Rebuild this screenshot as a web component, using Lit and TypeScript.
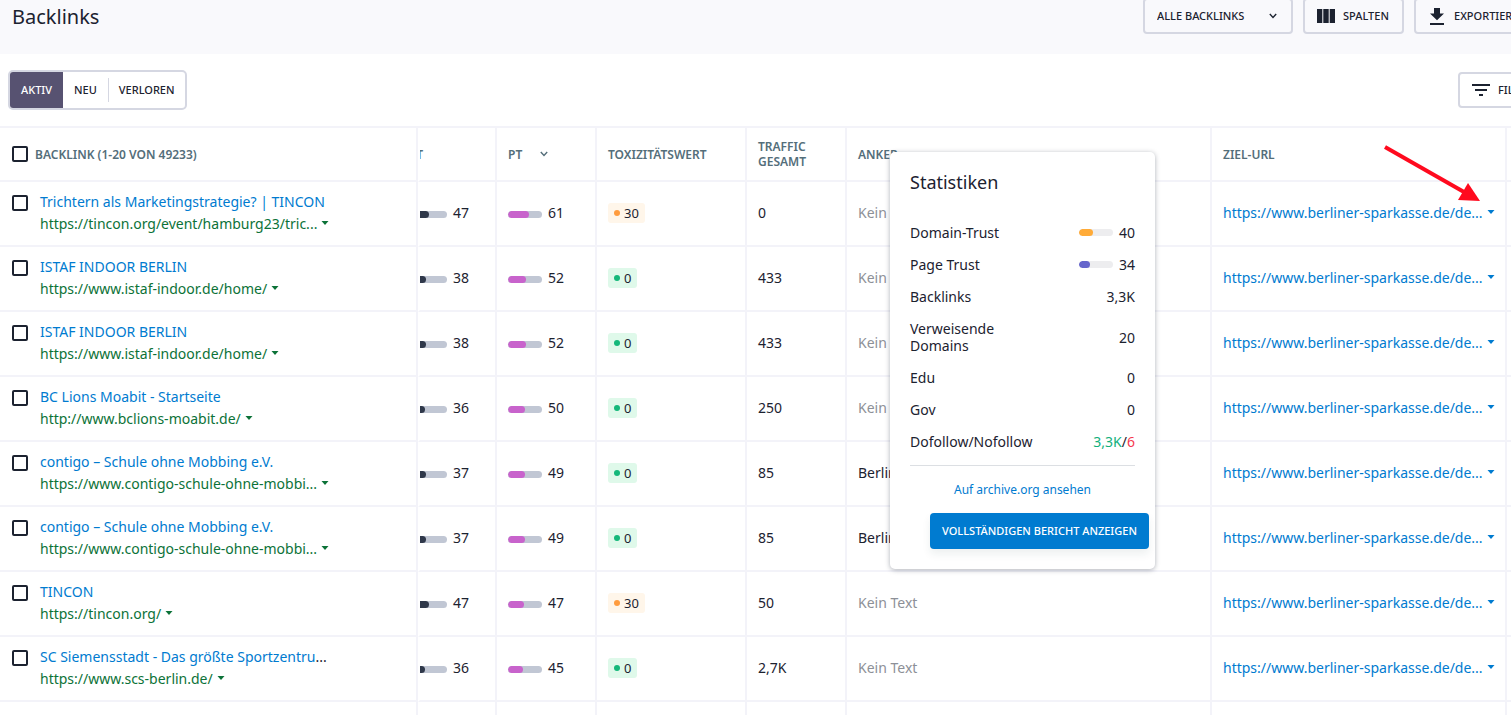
import { LitElement, html, css, svg, nothing } from "lit";
import { customElement } from "lit/decorators.js";

interface Row {
  title: string;
  cut?: boolean;
  url: string;
  long?: boolean;
  dt: number;
  pt: number;
  tox: number;
  traffic: string;
  anchor?: string;
}

const ROWS: Row[] = [
  { title: "Trichtern als Marketingstrategie? | TINCON", url: "https://tincon.org/event/hamburg23/tric...", long: true, dt: 47, pt: 61, tox: 30, traffic: "0" },
  { title: "ISTAF INDOOR BERLIN", url: "https://www.istaf-indoor.de/home/", dt: 38, pt: 52, tox: 0, traffic: "433" },
  { title: "ISTAF INDOOR BERLIN", url: "https://www.istaf-indoor.de/home/", dt: 38, pt: 52, tox: 0, traffic: "433" },
  { title: "BC Lions Moabit - Startseite", url: "http://www.bclions-moabit.de/", dt: 36, pt: 50, tox: 0, traffic: "250" },
  { title: "contigo – Schule ohne Mobbing e.V.", url: "https://www.contigo-schule-ohne-mobbi...", long: true, dt: 37, pt: 49, tox: 0, traffic: "85", anchor: "Berliner Sparkasse" },
  { title: "contigo – Schule ohne Mobbing e.V.", url: "https://www.contigo-schule-ohne-mobbi...", long: true, dt: 37, pt: 49, tox: 0, traffic: "85", anchor: "Berliner Sparkasse" },
  { title: "TINCON", url: "https://tincon.org/", dt: 47, pt: 47, tox: 30, traffic: "50" },
  { title: "SC Siemensstadt - Das größte Sportzentru", cut: true, url: "https://www.scs-berlin.de/", dt: 36, pt: 45, tox: 0, traffic: "2,7K" },
];

const caret = html`<svg class="caret" width="8" height="4" viewBox="0 0 8 4" aria-hidden="true"><path d="M0.5 0h7L4 4z" fill="currentColor" /></svg>`;

const chevron = html`<svg class="chevron" width="8" height="6" viewBox="0 0 8 6" aria-hidden="true">
  <path d="M0.8 1 4 4.400 7.200 1" fill="none" stroke="currentColor" stroke-width="1.400" />
</svg>`;

const icon = (w: number, h: number, shape: unknown) =>
  html`<svg width=${w} height=${h} viewBox="0 0 ${w} ${h}" fill="currentColor" aria-hidden="true">${shape}</svg>`;

const columnsIcon = icon(18, 14, svg`<path d="M0 0h5.3v14H0zM6.3 0h5.4v14H6.3zM12.7 0H18v14h-5.300z" />`);
const exportIcon = icon(14, 17, svg`<path d="M4 0h6v5.500h4L7 12.300 0 5.500h4zM0 15h14v2H0z" />`);
const filterIcon = icon(18, 12, svg`<path d="M0 0h18v2H0zM3 5h12v2H3zM7 10h4v2H7z" />`);

@customElement("app-root")
export class AppRoot extends LitElement {
  static styles = css`
    :host {
      display: block;
      position: relative;
      height: 100vh;
      overflow: hidden;
      background: #fff;
      color: #1c2230;
      font: 14px/22px "Noto Sans", "Open Sans", sans-serif;
    }
    * { box-sizing: border-box; }
    a { color: #007bd0; text-decoration: none; }
    button, select { font: 500 11px/16px "Noto Sans", "Open Sans", sans-serif; color: #1c2230; cursor: pointer; }
    svg { display: block; flex: none; }
    .page { margin-right: -56px; }
    .head {
      display: flex;
      gap: 10px;
      height: 56px;
      margin-top: -2px;
      padding: 0 16px 0 12px;
      background: #f9f9fc;
    }
    h1 { flex: 1; margin: 5px 0 0; font-size: 20px; line-height: 28px; font-weight: 400; }
    .btn {
      display: flex;
      align-items: center;
      gap: 8px;
      height: 36px;
      padding: 0 12px;
      border: 2px solid #d5d7e2;
      border-radius: 4px;
      background: transparent;
      white-space: nowrap;
    }
    .pick { display: grid; align-items: center; width: 150px; height: 36px; }
    .pick select {
      grid-area: 1 / 1;
      width: 100%;
      height: 36px;
      padding: 0 12px;
      border: 2px solid #d5d7e2;
      border-radius: 4px;
      appearance: none;
      background: transparent;
    }
    .pick .chevron { grid-area: 1 / 1; justify-self: end; margin-right: 16px; }
    .w-cols { width: 101px; }
    .w-export { width: 137px; gap: 10px; padding: 0 14px; }
    .w-filter { width: 93px; }
    .bar { display: flex; justify-content: space-between; align-items: center; height: 72px; padding: 0 16px 0 8px; }
    .tabs { display: flex; align-items: center; height: 40px; border: 2px solid #d5d7e2; border-radius: 5px; }
    .tabs button { height: 36px; border: 0; padding: 0 11px; background: none; }
    .tabs .on { background: #575271; color: #fff; border-radius: 3px 0 0 3px; }
    .tabs .last { height: 24px; padding: 0 10px; border-left: 1px solid #d5d7e2; }
    table { width: 100%; table-layout: fixed; border-collapse: separate; border-spacing: 0; border-top: 2px solid #f3f3f9; }
    th, td { padding: 0 11px; border: 0 solid #f3f3f9; border-width: 0 2px 2px 0; text-align: left; }
    th { height: 54px; font-size: 12px; line-height: 15px; font-weight: 600; color: #546e7a; }
    td { height: 65px; padding-bottom: 2px; }
    .c-link { width: 418px; }
    .c-dt { width: 79px; }
    .c-100 { width: 100px; }
    .c-tox { width: 150px; }
    .c-url { width: 295px; }
    .c-end { width: 60px; }
    .first { padding-left: 12px; }
    .dt { padding-left: 0; padding-right: 0; border-left: 2px solid #fff; }
    .clip { display: flex; justify-content: flex-end; overflow: hidden; }
    th .clip { padding-right: 72px; }
    .pick-all, .entry { display: flex; align-items: center; gap: 7px; }
    .entry { align-items: flex-start; gap: 12px; }
    .entry div { min-width: 0; white-space: nowrap; }
    input {
      flex: none;
      appearance: none;
      width: 16px;
      height: 16px;
      margin: 0;
      border: 2px solid #1c2230;
      border-radius: 2px;
      background: #fff;
    }
    .entry input { margin-top: 4px; }
    .title { display: block; }
    .dots { color: #1c2230; }
    .src, .target { display: flex; align-items: center; gap: 4px; }
    .src { color: #0c7238; }
    .caret { margin-bottom: 2px; }
    .target { white-space: nowrap; }
    .sort { display: flex; align-items: center; gap: 18px; }
    .meter { display: flex; align-items: center; }
    .track { flex: none; width: 34px; height: 7px; margin-right: 6px; border-radius: 4px; background: #c1c7d4; overflow: hidden; }
    td .track { margin-top: 4px; }
    .fill { height: 100%; border-radius: 4px; }
    .navy { background: #2f384a; }
    .pink { background: #c863cc; }
    .orange { background: #ffab38; }
    .violet { background: #6666cc; }
    .num { flex: none; width: 42px; }
    .tag { display: flex; align-items: center; gap: 4px; width: fit-content; height: 20px; padding: 0 6px; border-radius: 3px; background: #dff9ea; font-size: 13px; line-height: 20px; }
    .tag.warn { background: #fff6ea; }
    .dot { width: 6px; height: 6px; border-radius: 50%; background: #14b87a; }
    .warn .dot { background: #ff9c3f; }
    .none { color: #8d9097; }
    .popup {
      position: absolute;
      left: 890px;
      top: 152px;
      width: 265px;
      padding: 20px;
      border-radius: 5px;
      background: #fff;
      box-shadow: 0 1px 5px rgba(20, 30, 50, 0.35);
    }
    h2 { margin: 0 0 32px; font-size: 18px; line-height: 20px; font-weight: 400; }
    dl { margin: 0; padding-bottom: 15px; border-bottom: 1px solid #dcdfe3; display: grid; gap: 15px; line-height: 17px; }
    .stat { display: flex; justify-content: space-between; align-items: center; }
    dt { width: 130px; }
    .stat .narrow { width: 110px; }
    dd { margin: 0; display: flex; align-items: center; }
    dd .track { background: #ededef; }
    .good { color: #12b07c; }
    .bad { color: #f5384f; }
    .archive { display: block; margin: 15px 0 14px; text-align: center; font-size: 12px; line-height: 18px; }
    .report {
      display: block;
      width: 219px;
      height: 36px;
      margin-left: 20px;
      padding: 0;
      border: 0;
      border-radius: 4px;
      background: #007bd0;
      color: #fff;
      white-space: nowrap;
      box-shadow: 0 5px 8px rgba(30, 60, 60, 0.08);
    }
    .arrow { position: absolute; right: 31px; top: 143px; }
  `;

  private meter(value: number, tone: string) {
    return html`<div class="track"><div class="fill ${tone}" style="width:${value}%"></div></div>`;
  }

  private row(r: Row) {
    return html`<tr>
      <td class="first">
        <div class="entry">
          <input type="checkbox" aria-label=${r.title} />
          <div>
            <a class="title" href="#">${r.title}${r.cut ? html`<span class="dots">...</span>` : nothing}</a>
            <a class="src" href="#">${r.url}${caret}</a>
          </div>
        </div>
      </td>
      <td class="dt"><div class="clip meter">${this.meter(r.dt, "navy")}<span class="num">${r.dt}</span></div></td>
      <td><div class="meter">${this.meter(r.pt, "pink")}<span>${r.pt}</span></div></td>
      <td><span class="tag ${r.tox ? "warn" : ""}"><span class="dot"></span>${r.tox}</span></td>
      <td>${r.traffic}</td>
      <td>${r.anchor ?? html`<span class="none">Kein Text</span>`}</td>
      <td><a class="target" href="#">https://www.berliner-sparkasse.de/de...${caret}</a></td>
      <td></td>
    </tr>`;
  }

  private stat(label: string, value: unknown, cls = "") {
    return html`<div class="stat"><dt class=${cls}>${label}</dt><dd>${value}</dd></div>`;
  }

  render() {
    return html`
      <div class="page">
        <header class="head">
          <h1>Backlinks</h1>
          <div class="pick">
            <select aria-label="Backlinks"><option>ALLE BACKLINKS</option></select>
            ${chevron}
          </div>
          <button class="btn w-cols">${columnsIcon}SPALTEN</button>
          <button class="btn w-export">${exportIcon}EXPORTIEREN</button>
        </header>
        <div class="bar">
          <div class="tabs">
            <button class="on">AKTIV</button>
            <button>NEU</button>
            <button class="last">VERLOREN</button>
          </div>
          <button class="btn w-filter">${filterIcon}FILTER</button>
        </div>
        <table>
          <colgroup>
            <col class="c-link" /><col class="c-dt" /><col class="c-100" /><col class="c-tox" />
            <col class="c-100" /><col /><col class="c-url" /><col class="c-end" />
          </colgroup>
          <thead>
            <tr>
              <th class="first"><label class="pick-all"><input type="checkbox" />BACKLINK (1-20 VON 49233)</label></th>
              <th class="dt"><div class="clip">DT</div></th>
              <th><div class="sort">PT${chevron}</div></th>
              <th>TOXIZITÄTSWERT</th>
              <th>TRAFFIC GESAMT</th>
              <th>ANKER</th>
              <th>ZIEL-URL</th>
              <th></th>
            </tr>
          </thead>
          <tbody>
            ${ROWS.map((r) => this.row(r))}
            <tr><td></td><td class="dt"></td><td></td><td></td><td></td><td></td><td></td><td></td></tr>
          </tbody>
        </table>
      </div>
      <section class="popup">
        <h2>Statistiken</h2>
        <dl>
          ${this.stat("Domain-Trust", html`${this.meter(42, "orange")}40`)}
          ${this.stat("Page Trust", html`${this.meter(33, "violet")}34`)}
          ${this.stat("Backlinks", "3,3K")}
          ${this.stat("Verweisende Domains", "20", "narrow")}
          ${this.stat("Edu", "0")}
          ${this.stat("Gov", "0")}
          ${this.stat("Dofollow/Nofollow", html`<span class="good">3,3K</span>/<span class="bad">6</span>`)}
        </dl>
        <a class="archive" href="#">Auf archive.org ansehen</a>
        <button class="report">VOLLSTÄNDIGEN BERICHT ANZEIGEN</button>
      </section>
      <svg class="arrow" width="100" height="60" viewBox="0 0 100 60" aria-hidden="true">
        <path d="M5 4 84 49" stroke="#ff0a1e" stroke-width="4" />
        <path d="M100 58 88 40 78 57z" fill="#ff0a1e" />
      </svg>
    `;
  }
}
